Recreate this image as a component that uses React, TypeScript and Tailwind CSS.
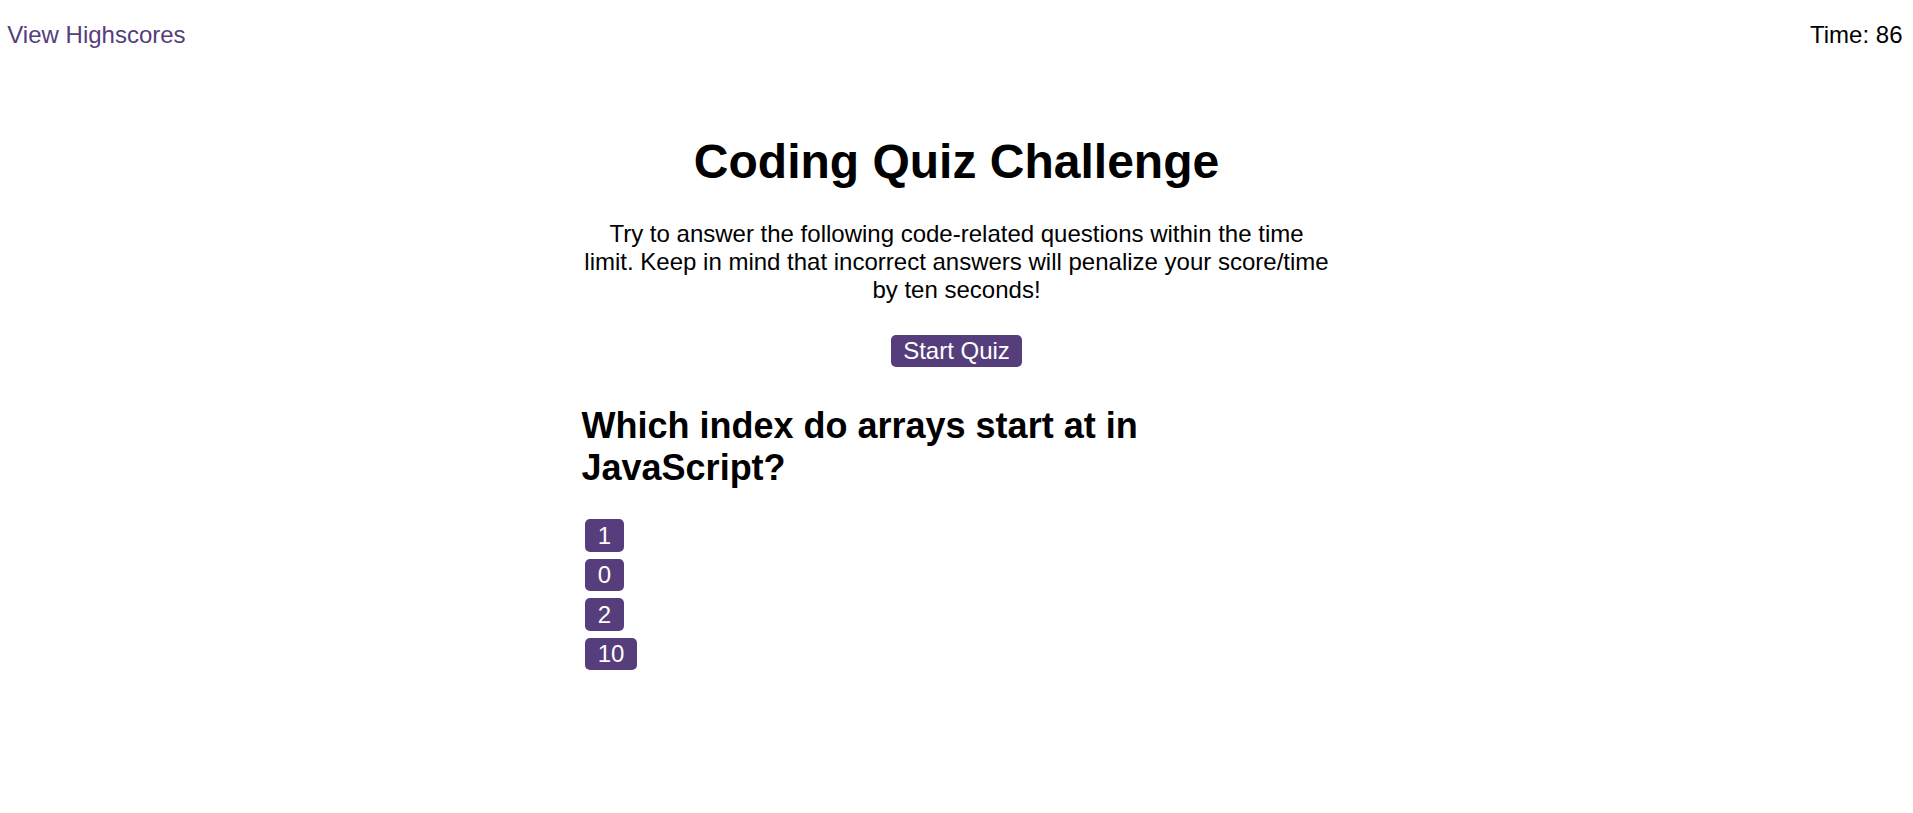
import React from 'react'

const answers = ['1', '0', '2', '10']

export default function App() {
  return (
    <div className="min-h-screen bg-white text-black font-['Liberation_Sans',Arial,sans-serif]">
      <header className="flex justify-between pt-[20.6px] pl-[7.3px] pr-[10.5px] text-[24px] leading-[normal]">
        <a className="text-[#563d7c] cursor-pointer">View Highscores</a>
        <span>Time: 86</span>
      </header>

      <main className="w-[750px] mx-auto">
        <h1 className="mt-[85.2px] text-center text-[48px] font-bold leading-[normal]">Coding Quiz Challenge</h1>
        <p className="mt-[31px] text-center text-[24px] leading-[normal]">
          Try to answer the following code-related questions within the time limit. Keep in mind that incorrect
          answers will penalize your score/time by ten seconds!
        </p>
        <div className="mt-[31.6px] flex justify-center">
          <button className="h-[32px] flex items-center bg-[#563d7c] text-white text-[24px] leading-[normal] px-3 rounded-[5px]">
            Start Quiz
          </button>
        </div>

        <h2 className="mt-[37.5px] text-[36px] font-bold leading-[normal]">
          Which index do arrays start at in JavaScript?
        </h2>
        <div className="mt-[30.4px] ml-[3.5px] flex flex-col items-start gap-[7px]">
          {answers.map((a) => (
            <button
              key={a}
              className="h-[32.5px] flex items-center bg-[#563d7c] text-white text-[24px] leading-[normal] px-[12.7px] rounded-[5px]"
            >
              {a}
            </button>
          ))}
        </div>
      </main>
    </div>
  )
}
